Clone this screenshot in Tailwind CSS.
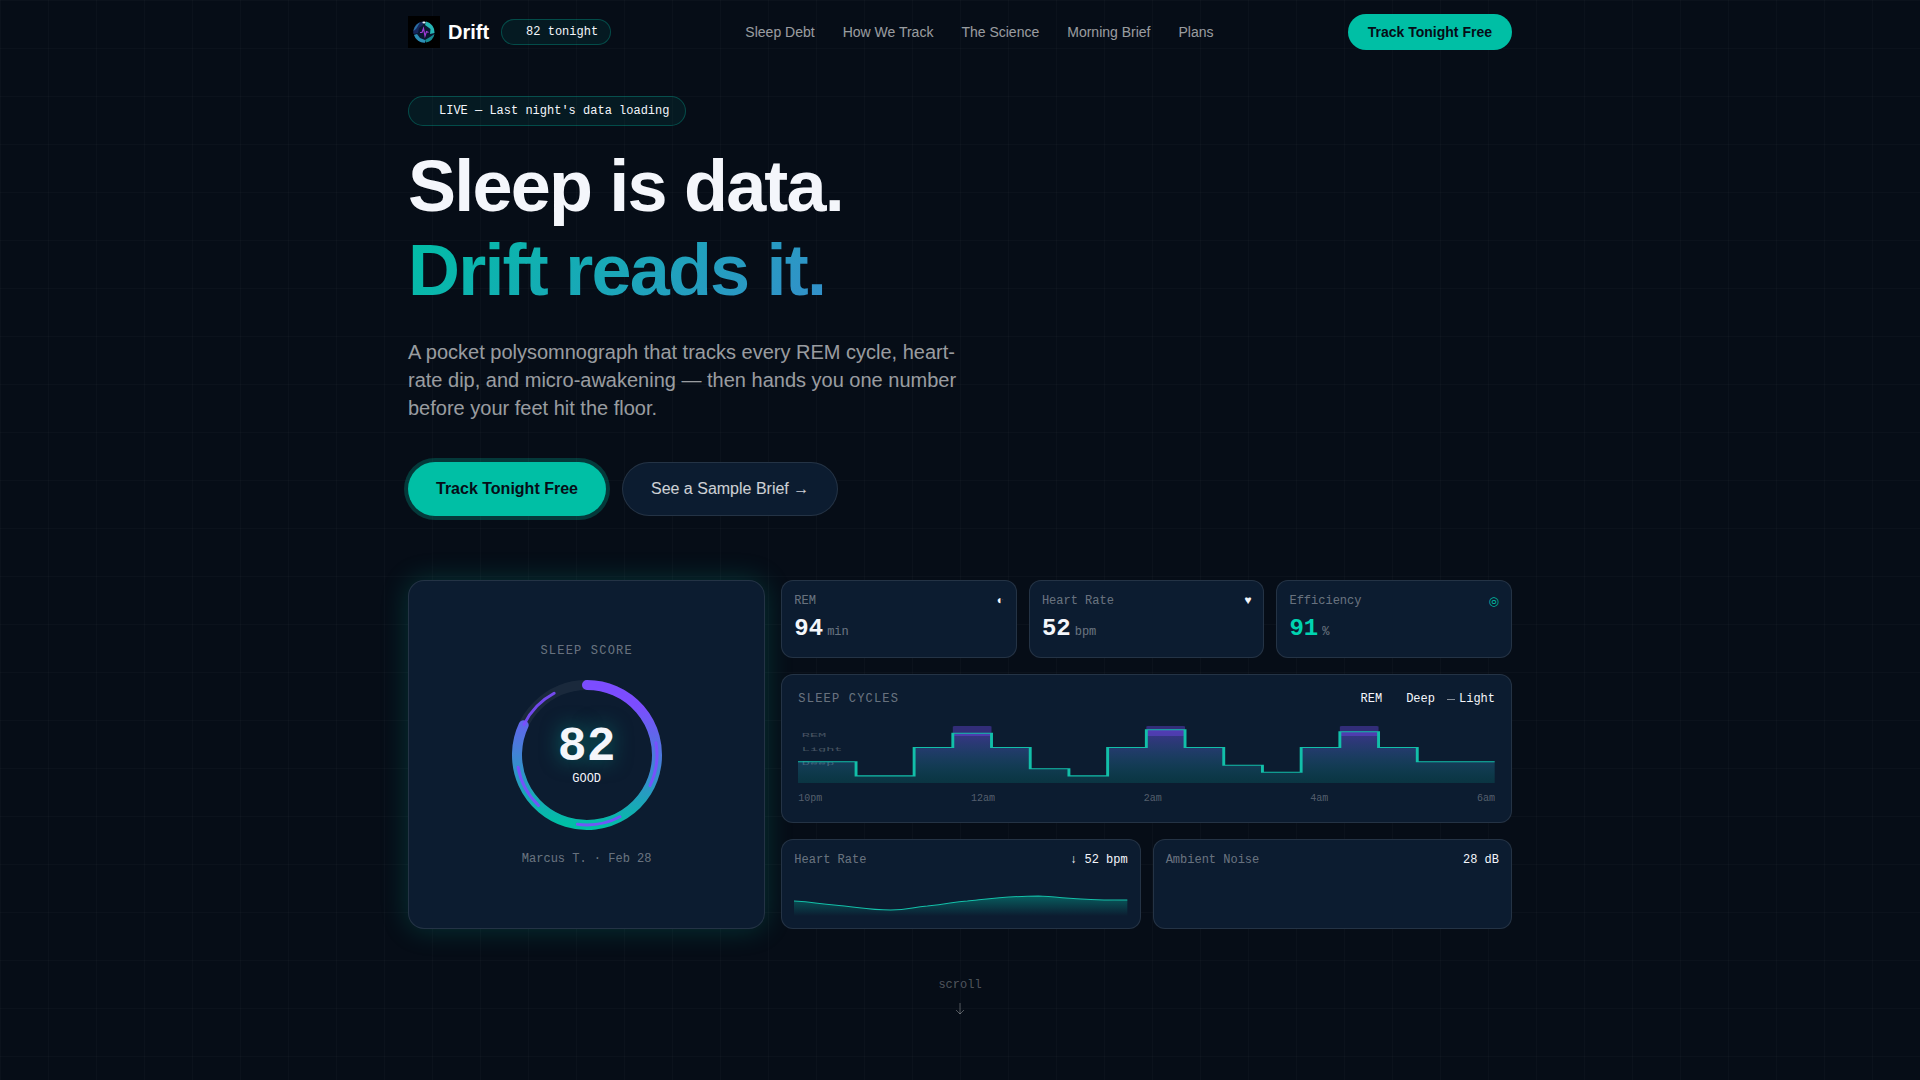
<!doctype html>
<html lang="en">

<head>
    <meta charset="UTF-8">
    <meta name="viewport" content="width=device-width, initial-scale=1.0">
    <meta name="description" content="Drift tracks your sleep and hands you one number every morning">
    <title>Drift - Sleep is data</title>
    <script src="https://cdn.jsdelivr.net/npm/@tailwindcss/browser@4"></script>
</head>

<body
    class="min-h-screen bg-[#060d17] bg-[linear-gradient(rgba(255,255,255,0.02)_1px,transparent_1px),linear-gradient(90deg,rgba(255,255,255,0.02)_1px,transparent_1px)] bg-[size:48px_48px] text-[#f4f6fb] font-['Liberation_Sans',Arial,sans-serif]">
    <header>
        <nav class="max-w-6xl mx-auto px-6 h-16 flex items-center justify-between">
            <div class="flex items-center gap-3">
                <a href="#" class="flex items-center gap-2">
                    <svg class="size-8" viewBox="0 0 32 32" fill="none" aria-hidden="true">
                        <rect width="32" height="32" fill="#000" />
                        <circle cx="16" cy="16" r="10.5" fill="#0a1730" />
                        <path d="M15 5.500A10.500 10.500 0 0 0 5.500 18L10 17L11 12L15 9Z" fill="#16265c" />
                        <path d="M18 5.500A10.800 10.800 0 0 1 26.500 17L22 18L22.500 13L17 9Z" fill="#27b6b4" />
                        <path d="M26.500 18A10.800 10.800 0 0 1 18 26.500L17 24L22 21Z" fill="#168a90" />
                        <path d="M6 19A10.800 10.800 0 0 0 17 26.700L17 24L12 22L9 18Z" fill="#2c8fb5" />
                        <path d="M5.500 15C6 11 9 7.500 12 6.500L8 13Z" fill="#2a6fa0" />
                        <path d="M12 16.500H14L15.500 12.500L17 20L18.500 15.500L20.500 16.500" stroke="#a13bd6" stroke-width="1.200" />
                        <ellipse cx="16" cy="6.500" rx="1.600" ry="1" fill="#e8f6ff" />
                    </svg>
                    <span class="text-xl font-bold text-white">Drift</span>
                </a>
                <span
                    class="flex items-center gap-1 rounded-full border border-[#00bfa5]/30 bg-[#00bfa5]/8 px-3 py-1 font-['Liberation_Mono',monospace] text-xs">
                    <i class="size-2"></i>82 tonight
                </span>
            </div>
            <div class="flex items-center gap-7 text-sm text-white/60">
                <a href="#debt" class="hover:text-white">Sleep Debt</a>
                <a href="#track" class="hover:text-white">How We Track</a>
                <a href="#science" class="hover:text-white">The Science</a>
                <a href="#brief" class="hover:text-white">Morning Brief</a>
                <a href="#plans" class="hover:text-white">Plans</a>
            </div>
            <button type="button"
                class="rounded-full bg-[#00bfa5] px-5 py-2 text-sm font-bold text-[#060d17] hover:bg-[#00d4b8]">Track
                Tonight Free</button>
        </nav>
    </header>

    <main class="max-w-6xl mx-auto px-6 pt-8">
        <div
            class="inline-flex items-center gap-2 rounded-full border border-[#00bfa5]/30 bg-[#00bfa5]/8 px-4 py-1.5 font-['Liberation_Mono',monospace] text-xs">
            <i class="size-1.5"></i>LIVE — Last night's data loading
        </div>
        <h1 class="mt-[18px] text-7xl/[84px] font-bold tracking-tight">
            Sleep is data.
            <span
                class="block bg-[linear-gradient(135deg,#00bfa5,#7c4dff)] bg-clip-text text-transparent">Drift
                reads it.</span>
        </h1>
        <p class="mt-[26px] max-w-xl text-xl/7 text-white/60">A pocket polysomnograph that tracks every REM cycle, heart-rate
            dip, and micro-awakening — then hands you one number before your feet hit the floor.</p>
        <div class="mt-10 flex gap-4">
            <button type="button"
                class="h-[54px] rounded-full bg-[#00bfa5] px-7 font-bold text-[#060d17] shadow-[0_0_0_4px_rgba(0,191,165,0.25)]">Track
                Tonight Free</button>
            <button type="button"
                class="h-[54px] rounded-full border border-white/10 bg-[#0c1c30] px-7 text-white/80">See a Sample Brief
                →</button>
        </div>

        <section class="mt-16 grid grid-cols-3 gap-4 font-['Liberation_Mono',monospace] text-xs">
            <!-- score -->
            <div
                class="flex flex-col items-center justify-center gap-4 rounded-2xl border border-white/10 bg-[#0c1c30] shadow-[0_0_28px_rgba(0,191,165,0.22)]">
                <h2 class="tracking-widest text-white/40">SLEEP SCORE</h2>
                <div class="grid place-items-center">
                    <svg class="col-start-1 row-start-1 size-40" viewBox="0 0 160 160" fill="none">
                        <defs>
                            <linearGradient id="ring" gradientUnits="userSpaceOnUse" x1="85" y1="5" x2="72" y2="150">
                                <stop offset="0.15" stop-color="#7c4dff" />
                                <stop offset="1" stop-color="#00bfa5" />
                            </linearGradient>
                        </defs>
                        <circle cx="80" cy="80" r="70" stroke="#fff" stroke-opacity="0.06" stroke-width="10" />
                        <!-- 82% of the circle -->
                        <path d="M80 10A70 70 0 1 1 16.660 50.190" stroke="url(#ring)" stroke-width="10"
                            stroke-linecap="round" />
                        <circle cx="80" cy="80" r="70" stroke="#7c4dff" stroke-opacity="0.9" stroke-width="3"
                            stroke-linecap="round" pathLength="100" stroke-dasharray="10 10" stroke-dashoffset="-2.200"
                            transform="rotate(-90 80 80)" />
                    </svg>
                    <div class="col-start-1 row-start-1 text-center">
                        <div class="text-5xl/[48px] font-bold [text-shadow:0_0_20px_rgba(0,191,165,0.5)]">82</div>
                        <div>GOOD</div>
                    </div>
                </div>
                <p class="text-white/40">Marcus T. · Feb 28</p>
            </div>

            <div class="col-span-2 flex flex-col gap-4">
                <div class="grid grid-cols-3 gap-3">
                    <div class="rounded-xl border border-white/10 bg-[#0c1c30] p-3">
                        <div class="flex justify-between"><span class="text-white/40">REM</span><span>◐</span></div>
                        <div class="mt-1 flex items-baseline gap-1"><b class="text-2xl">94</b><span
                                class="text-white/40">min</span></div>
                    </div>
                    <div class="rounded-xl border border-white/10 bg-[#0c1c30] p-3">
                        <div class="flex justify-between"><span class="text-white/40">Heart Rate</span><span>♥</span>
                        </div>
                        <div class="mt-1 flex items-baseline gap-1"><b class="text-2xl">52</b><span
                                class="text-white/40">bpm</span></div>
                    </div>
                    <div class="rounded-xl border border-white/10 bg-[#0c1c30] p-3">
                        <div class="flex justify-between"><span class="text-white/40">Efficiency</span><span
                                class="font-['DejaVu_Sans',sans-serif] text-[#00bfa5]">◎</span></div>
                        <div class="mt-1 flex items-baseline gap-1"><b class="text-2xl text-[#00d4b0]">91</b><span
                                class="text-white/40">%</span></div>
                    </div>
                </div>

                <!-- hypnogram -->
                <div class="rounded-xl border border-white/10 bg-[#0c1c30] p-4">
                    <div class="flex justify-between">
                        <h2 class="tracking-widest text-white/40">SLEEP CYCLES</h2>
                        <div class="flex gap-3">
                            <span class="flex items-center gap-1"><i class="size-2"></i>REM</span>
                            <span class="flex items-center gap-1"><i class="size-2"></i>Deep</span>
                            <span class="flex items-center gap-1"><i class="h-px w-2 bg-white/50"></i>Light</span>
                        </div>
                    </div>
                    <svg class="mt-3 block h-16 w-full" viewBox="0 0 360 90" preserveAspectRatio="none" fill="none">
                        <defs>
                            <linearGradient id="cycle" x1="0" y1="0" x2="0" y2="1">
                                <stop offset="0" stop-color="#7c4dff" stop-opacity="0.450" />
                                <stop offset="1" stop-color="#00bfa5" stop-opacity="0.150" />
                            </linearGradient>
                        </defs>
                        <g fill="#fff" fill-opacity="0.25" font-size="7">
                            <text x="2" y="25">REM</text>
                            <text x="2" y="45">Light</text>
                            <text x="2" y="65">Deep</text>
                        </g>
                        <path fill="url(#cycle)"
                            d="M0 60H30V80H60V40H80V20H100V40H120V70H140V80H160V40H180V15H200V40H220V65H240V75H260V40H280V18H300V40H320V60H360V90H0Z" />
                        <g fill="#7c4dff" fill-opacity="0.35">
                            <rect x="80" y="10" width="20" height="14" rx="1" />
                            <rect x="180" y="10" width="20" height="14" rx="1" />
                            <rect x="280" y="10" width="20" height="14" rx="1" />
                        </g>
                        <path stroke="#12bfa9" stroke-width="1.500"
                            d="M0 60H30V80H60V40H80V20H100V40H120V70H140V80H160V40H180V15H200V40H220V65H240V75H260V40H280V18H300V40H320V60H360" />
                    </svg>
                    <div class="mt-2 flex justify-between text-[10px]/[15px] text-white/30">
                        <span>10pm</span><span>12am</span><span>2am</span><span>4am</span><span>6am</span>
                    </div>
                </div>

                <div class="grid grid-cols-2 gap-3">
                    <div class="rounded-xl border border-white/10 bg-[#0c1c30] p-3">
                        <div class="flex justify-between"><span class="text-white/40">Heart Rate</span><span>↓ 52
                                bpm</span></div>
                        <svg class="mt-2 block h-10 w-full" viewBox="0 0 300 40" preserveAspectRatio="none" fill="none">
                            <defs>
                                <linearGradient id="pulse" x1="0" y1="0" x2="0" y2="1">
                                    <stop offset="0" stop-color="#00bfa5" stop-opacity="0.400" />
                                    <stop offset="1" stop-color="#00bfa5" stop-opacity="0" />
                                </linearGradient>
                            </defs>
                            <path fill="url(#pulse)"
                                d="M0 25C18 26 22 28 36 29C58 31 66 34 87 34C104 34 106 31 120 30C140 28 142 26 156 25C174 23 192 20 220 20C242 21 262 25 300 24V40H0Z" />
                            <path stroke="#14bfa8"
                                d="M0 25C18 26 22 28 36 29C58 31 66 34 87 34C104 34 106 31 120 30C140 28 142 26 156 25C174 23 192 20 220 20C242 21 262 25 300 24" />
                        </svg>
                    </div>
                    <div class="rounded-xl border border-white/10 bg-[#0c1c30] p-3">
                        <div class="flex justify-between"><span class="text-white/40">Ambient Noise</span><span>28
                                dB</span></div>
                    </div>
                </div>
            </div>
        </section>

        <div
            class="mt-12 flex flex-col items-center gap-2 font-['Liberation_Mono',monospace] text-xs text-white/30">
            <span>scroll</span>
            <svg class="size-4" viewBox="0 0 16 16" fill="none" stroke="currentColor" aria-hidden="true">
                <path d="M8 2V13M4 9L8 13L12 9" />
            </svg>
        </div>
    </main>
</body>

</html>
